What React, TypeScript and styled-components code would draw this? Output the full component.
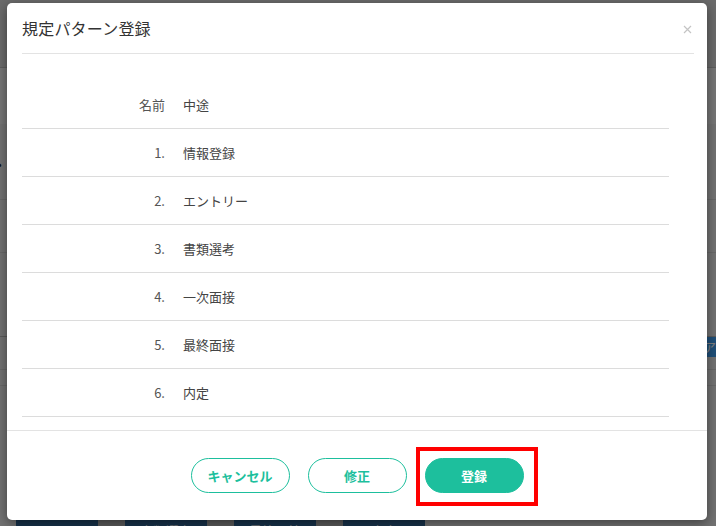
import React from "react";
import styled, { createGlobalStyle } from "styled-components";

const Global = createGlobalStyle`
  html, body { margin: 0; padding: 0; }
  body {
    width: 716px;
    height: 526px;
    overflow: hidden;
    font-family: "Noto Sans CJK JP", "Noto Sans", sans-serif;
  }
  * { box-sizing: border-box; }
`;

/* ---------- background page ---------- */
const Page = styled.div`
  position: relative;
  width: 716px;
  height: 526px;
  overflow: hidden;
  background: #e4e4e4;
  display: flex;
  flex-direction: column;
`;

const TopBar = styled.div`
  height: 68px;
  flex: none;
  background: #d6d6d6;
  border-bottom: 1px solid #bdbdbd;
`;

const SubBar = styled.div`
  height: 56px;
  flex: none;
  background: #ececec;
  display: flex;
  align-items: flex-end;
`;

const SideLabel = styled.div`
  height: 20px;
  margin: 0 0 -50px -8px;
  font-size: 15px;
  color: #222;
`;

const PageRow = styled.div<{ $h: number; $line?: string; $bg?: string; $indent?: number }>`
  height: ${(p) => p.$h}px;
  flex: none;
  margin-left: ${(p) => p.$indent || 0}px;
  background: ${(p) => p.$bg || "transparent"};
  border-bottom: 1px solid ${(p) => p.$line || "#c9c9c9"};
  display: flex;
  justify-content: flex-end;
  align-items: center;
  color: #fff;
  font-size: 13px;
`;

const Spacer = styled.div`
  flex: 1;
`;

const Tabs = styled.div`
  height: 34px;
  flex: none;
  margin-bottom: -21px;
  display: flex;
  padding-left: 16px;
  background: #e4e4e4;
`;

const Tab = styled.div<{ $dark?: boolean }>`
  width: ${(p) => (p.$dark ? 82 : 27)}px;
  background: ${(p) => (p.$dark ? "#2f6597" : "#b7b7b7")};
  color: #e8eef4;
  font-size: 13px;
  display: flex;
  align-items: center;
  justify-content: center;
`;

/* ---------- modal ---------- */
const Overlay = styled.div`
  position: absolute;
  inset: 0;
  background: rgba(0, 0, 0, 0.5);
  padding-top: 3px;
`;

const Modal = styled.div`
  width: 700px;
  margin-left: 7px;
  background: #fff;
  border-radius: 5px;
  box-shadow: 0 3px 12px rgba(0, 0, 0, 0.45);
  display: flex;
  flex-direction: column;
`;

const Header = styled.div`
  padding: 0 13px 0 15px;
`;

const HeaderInner = styled.div`
  height: 51px;
  border-bottom: 1px solid #e3e3e3;
  display: flex;
  align-items: center;
  justify-content: space-between;
`;

const Title = styled.h4`
  margin: 0;
  font-size: 16px;
  font-weight: 400;
  color: #333;
  letter-spacing: 0.2px;
`;

const Close = styled.button`
  border: 0;
  background: none;
  padding: 0;
  margin-right: 2px;
  margin-top: 2px;
  width: 9px;
  height: 9px;
  display: flex;
  cursor: pointer;
`;

const Body = styled.div`
  padding: 27px 38px 13px 15px;
`;

const Row = styled.div`
  height: 48px;
  border-bottom: 1px solid #dcdcdc;
  display: flex;
  align-items: center;
  font-size: 13px;
`;

const Label = styled.div`
  width: 143px;
  text-align: right;
  color: #555;
`;

const Value = styled.div`
  padding-left: 18px;
  color: #444;
`;

const Footer = styled.div`
  border-top: 1px solid #e3e3e3;
  padding: 27px 0;
  display: flex;
  justify-content: center;
  gap: 18px;
`;

const Btn = styled.button<{ $primary?: boolean }>`
  width: 99px;
  height: 35px;
  border-radius: 18px;
  border: 1px solid #1dbf9d;
  background: ${(p) => (p.$primary ? "#1dbf9d" : "#fff")};
  color: ${(p) => (p.$primary ? "#fff" : "#1dbf9d")};
  font-family: "Noto Sans CJK JP", "Noto Sans", sans-serif;
  font-size: 13px;
  font-weight: 700;
  padding: 0;
  cursor: pointer;
`;

const Highlight = styled.div`
  position: relative;
  display: flex;
  &::after {
    content: "";
    position: absolute;
    left: -9px;
    top: -11px;
    right: -14px;
    bottom: -13px;
    border: 4px solid #ff0000;
    pointer-events: none;
  }
`;

const rows: [string, string][] = [
  ["名前", "中途"],
  ["1.", "情報登録"],
  ["2.", "エントリー"],
  ["3.", "書類選考"],
  ["4.", "一次面接"],
  ["5.", "最終面接"],
  ["6.", "内定"],
];

export default function App() {
  return (
    <>
      <Global />
      <Page>
        <TopBar />
        <SubBar>
          <SideLabel>・言</SideLabel>
        </SubBar>
        <PageRow $h={76} $line="#d0d0d0" />
        <PageRow $h={53} $line="#d0d0d0" />
        <PageRow $h={84} $line="#b4b4b4" />
        <PageRow $h={20} $bg="#3f9ff0" $line="#3f9ff0" $indent={400}>
          ア
        </PageRow>
        <PageRow $h={13} $line="#d0d0d0" />
        <PageRow $h={16} $line="#d0d0d0" />
        <Spacer />
        <Tabs>
          <Tab $dark>エントリー</Tab>
          <Tab />
          <Tab $dark>書類選考</Tab>
          <Tab />
          <Tab $dark>最終面接</Tab>
          <Tab />
          <Tab $dark>内定</Tab>
        </Tabs>

        <Overlay>
          <Modal>
            <Header>
              <HeaderInner>
                <Title>規定パターン登録</Title>
                <Close aria-label="close">
                  <svg width="9" height="9" viewBox="0 0 9 9">
                    <path d="M1 1 L8 8 M8 1 L1 8" stroke="#c4c4c4" strokeWidth="1.2" fill="none" />
                  </svg>
                </Close>
              </HeaderInner>
            </Header>
            <Body>
              {rows.map(([l, v]) => (
                <Row key={l}>
                  <Label>{l}</Label>
                  <Value>{v}</Value>
                </Row>
              ))}
            </Body>
            <Footer>
              <Btn>キャンセル</Btn>
              <Btn>修正</Btn>
              <Highlight>
                <Btn $primary>登録</Btn>
              </Highlight>
            </Footer>
          </Modal>
        </Overlay>
      </Page>
    </>
  );
}
